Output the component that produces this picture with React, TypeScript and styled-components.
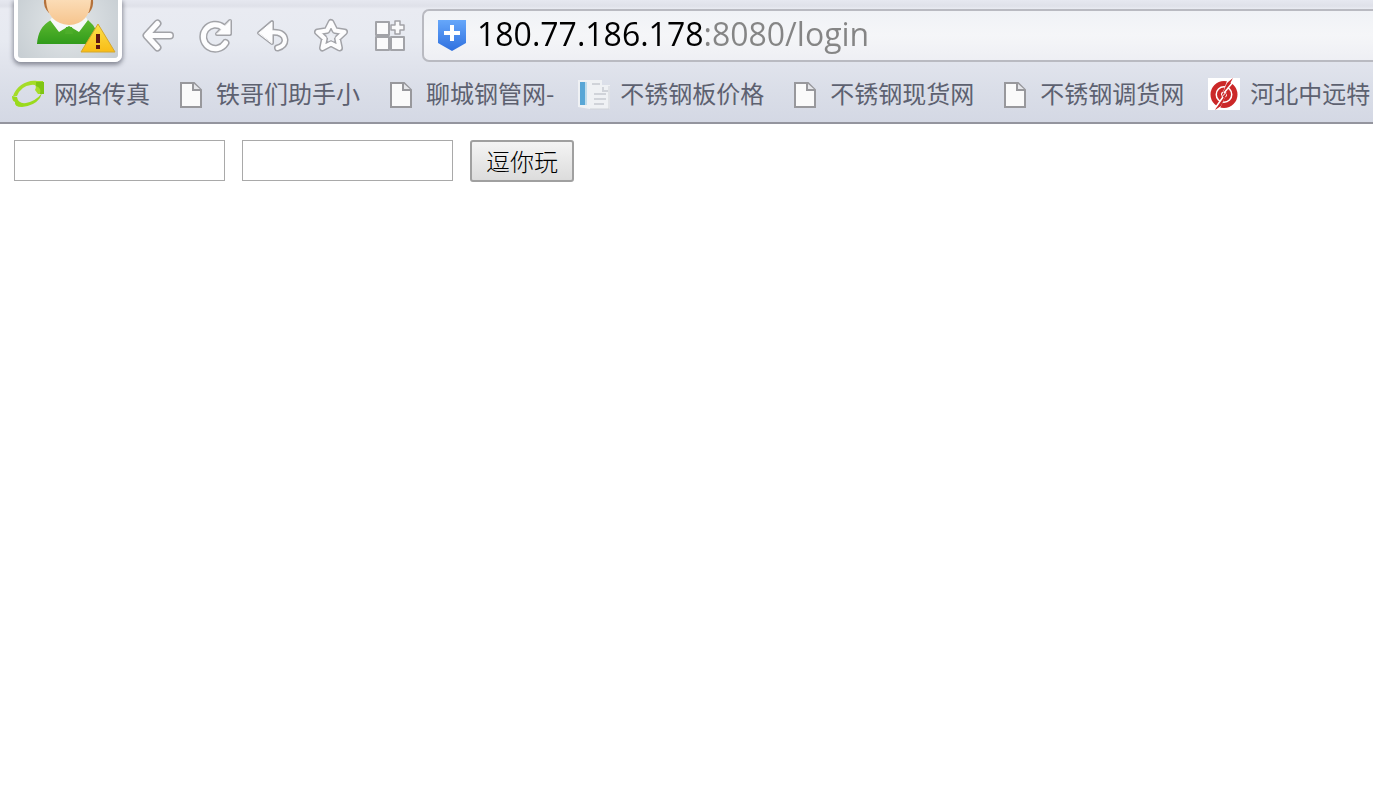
import React from "react";
import styled, { createGlobalStyle } from "styled-components";

const GlobalStyle = createGlobalStyle`
  body {
    margin: 0;
    background: #fff;
    font-family: "Noto Sans CJK SC", sans-serif;
  }
  * { box-sizing: border-box; }
`;

const Chrome = styled.header`
  overflow: hidden;
  border-bottom: 2px solid #94959e;
  background: linear-gradient(#e6e8f0 0, #dfe1e9 6px, #e9ebf2 9px, #e7eaf1 40px, #e0e3ec 66px, #dadee8 90px, #d4d8e4 100%);
`;

const Toolbar = styled.div`
  display: flex;
  align-items: flex-start;
  height: 70px;
  padding-left: 14px;
`;

const Avatar = styled.button`
  flex: none;
  width: 108px;
  height: 62px;
  margin-right: 7px;
  padding: 0;
  border: 4px solid #fff;
  border-top: 0;
  border-radius: 0 0 7px 7px;
  background: radial-gradient(circle at 50% 40%, #e4e8ea, #c6cdd2);
  box-shadow: 0 2px 4px 1px rgba(90, 94, 108, 0.65);
  overflow: hidden;
  svg { display: block; }
`;

const ToolButton = styled.button`
  flex: none;
  display: flex;
  align-items: center;
  justify-content: center;
  width: 58px;
  height: 70px;
  padding: 0;
  border: 0;
  background: none;
`;

const AddressBar = styled.label`
  flex: 1;
  display: flex;
  align-items: center;
  gap: 11px;
  min-width: 0;
  height: 53px;
  margin: 9px 0 0 3px;
  padding-left: 14px;
  border: 2px solid #b9bac1;
  border-right: 0;
  border-radius: 7px 0 0 7px;
  background: linear-gradient(#f0f2f6, #f5f6f8 50%, #eeeff4);
  svg { flex: none; }
`;

/* The host is shown in black and the rest of the URL in grey. */
const AddressInput = styled.input`
  flex: 1;
  min-width: 0;
  height: 48px;
  padding: 0 0 4px;
  border: 0;
  outline: 0;
  font: 32px/44px "Open Sans", sans-serif;
  color: #000;
  background: linear-gradient(90deg, #000 227px, #858585 227px);
  -webkit-background-clip: text;
  background-clip: text;
  -webkit-text-fill-color: transparent;
`;

const Bookmarks = styled.nav`
  display: flex;
  gap: 24px;
  height: 52px;
  padding: 0 0 4px 12px;
`;

const Bookmark = styled.a`
  flex: none;
  display: flex;
  align-items: center;
  gap: 10px;
  color: #5d6170;
  text-decoration: none;
`;

const BookmarkTitle = styled.span`
  padding-bottom: 2px;
  font-size: 24px;
  line-height: 46px;
  white-space: nowrap;
`;

const LoginForm = styled.form`
  display: flex;
  gap: 17px;
  padding: 16px 14px;
`;

const Field = styled.input`
  width: 211px;
  height: 41px;
  padding: 4px;
  border: 1px solid #a9a9a9;
  background: #fff;
  font: 24px "Noto Sans CJK SC", sans-serif;
`;

const Submit = styled.button`
  width: 104px;
  height: 42px;
  padding: 0;
  border: 2px solid #a0a0a0;
  border-radius: 3px;
  background: linear-gradient(#f4f4f4, #dcdcdc);
  color: #000;
  font: 300 24px/36px "Noto Sans CJK SC", sans-serif;
`;

const Portrait = () => (
  <svg width="100" height="58" viewBox="0 0 100 58" aria-hidden="true">
    <defs>
      <linearGradient id="shirt" x2="0" y2="1">
        <stop stopColor="#62bd32" />
        <stop offset="1" stopColor="#319b1b" />
      </linearGradient>
      <linearGradient id="skin" x2="0" y2="1">
        <stop stopColor="#fbdcb6" />
        <stop offset="1" stopColor="#f6c48d" />
      </linearGradient>
      <linearGradient id="warn" x2="0" y2="1">
        <stop stopColor="#fbe14b" />
        <stop offset="1" stopColor="#f9bc16" />
      </linearGradient>
    </defs>
    <path d="M26 0H75Q76 7 71 13L31 13Q25 7 26 0Z" fill="#b4713a" />
    <path d="M19 44Q20 27 33 20L37 17H65L70 20Q80 28 82 44Z" fill="url(#shirt)" />
    <path d="M32 20L36 15Q50 30 66 15L70 20L61 32L51 26L41 32Z" fill="#f5f8f7" />
    <path d="M48 27H54L55 34H47Z" fill="#4dae2a" />
    <path d="M28 0H73Q72 24 51 25Q29 23 28 0Z" fill="url(#skin)" />
    <path d="M80 24L97 52H63Z" fill="url(#warn)" stroke="#d4a72c" strokeWidth="1" strokeLinejoin="round" />
    <path d="M78 34H82V43H78ZM78 45H82V49H78Z" fill="#5d1613" />
  </svg>
);

const Tool = ({ children }: { children: React.ReactNode }) => (
  <svg width="36" height="36" viewBox="0 0 36 36" strokeLinejoin="round" strokeLinecap="round" aria-hidden="true">
    {children}
  </svg>
);

/* A white line with a grey rim, optionally joined to a solid shape. */
const Rimmed = ({ line, shape = "", width = 5 }: { line: string; shape?: string; width?: number }) => (
  <>
    <path d={line} fill="none" stroke="#a2a3a8" strokeWidth={width + 3} />
    <path d={shape} fill="#a2a3a8" stroke="#a2a3a8" strokeWidth="4" />
    <path d={line} fill="none" stroke="#fdfdfe" strokeWidth={width} />
    <path d={shape} fill="#fdfdfe" stroke="#fdfdfe" strokeWidth="1" />
  </>
);

const BackIcon = () => (
  <Tool>
    <Rimmed line="M17.500 6.500L6.500 18.500L17.500 30.500M8 18.500H30" />
  </Tool>
);
const ReloadIcon = () => (
  <Tool>
    <Rimmed line="M25 10.500A12 12 0 1 0 27.500 26" shape="M32 4V17H19Z" />
  </Tool>
);
const UndoIcon = () => (
  <Tool>
    <Rimmed line="M14 15.500Q28 14 29 23Q29 29 21.500 31" width={4} shape="M3 16L16 5V26Z" />
  </Tool>
);
const StarIcon = () => (
  <Tool>
    <Rimmed width={4} line="M17 5.500L21 13.500L30.500 15L23.500 21.500L25.500 31L17 26.500L8.500 31L10.500 21.500L3.500 15L13 13.500Z" />
    <path d="M17 16L18.500 19L21.500 19.500L19.500 21.500L20 24.500L17 23L14 24.500L14.500 21.500L12.500 19.500L15.500 19Z" fill="#eceef3" />
  </Tool>
);
const AppsIcon = () => (
  <Tool>
    <path d="M4 5H17V18H4ZM4 20H17V33H4ZM19 20H32V33H19Z" fill="#fafafb" stroke="#a2a3a8" strokeWidth="2" />
    <path d="M23 4H28V8H32V13H28V17H23V13H19V8H23Z" fill="#fafafb" stroke="#a2a3a8" strokeWidth="1.5" />
  </Tool>
);

const ShieldIcon = () => (
  <svg width="28" height="31" viewBox="0 0 28 31" aria-hidden="true">
    <defs>
      <linearGradient id="shield" x2="0" y2="1">
        <stop stopColor="#66a7fa" />
        <stop offset="1" stopColor="#2f70df" />
      </linearGradient>
    </defs>
    <path d="M0 0H28V23L14 31L0 23Z" fill="url(#shield)" />
    <path d="M14 5V21M6 13H22" stroke="#fff" strokeWidth="4" />
  </svg>
);

const Favicon = ({ children }: { children: React.ReactNode }) => (
  <svg width="32" height="32" viewBox="0 0 32 32" aria-hidden="true">
    {children}
  </svg>
);

const FaxIcon = () => (
  <Favicon>
    <path d="M1 18C4 8 16 1 25 3L31 3Q32 10 31 16H26L23 12Q26 6 19 7Q9 8 5 18Z" fill="#a5dc28" />
    <path d="M0 18Q0 23 3 24Q2 29 10 29Q22 28 28 20L30 15Q24 23 14 25Q6 26 5 19Z" fill="#9ada1c" />
    <path d="M24 4H32V16H28Q30 10 24 8Z" fill="#7fc514" />
  </Favicon>
);
const PageIcon = () => (
  <Favicon>
    <path d="M7 5H20L27 12V29H7Z" fill="#fafafa" stroke="#98989c" strokeWidth="2" />
    <path d="M19 5V12H27" fill="#e5e6ea" stroke="#98989c" strokeWidth="2" />
  </Favicon>
);
const SheetIcon = () => (
  <Favicon>
    <path d="M0 2H24V7H32V31H12L0 29Z" fill="#eff1f4" />
    <path d="M2 4H7V27H2Z" fill="#58a6d6" />
    <path d="M7 4H9V27H7Z" fill="#bfdcec" />
    <path d="M14 6H22M16 16H28M16 21H28M16 26H26M25 9V13H30" fill="none" stroke="#d0d3d9" strokeWidth="2" />
    <path d="M31 8V31H12" fill="none" stroke="#cfd2d8" />
  </Favicon>
);
const SteelIcon = () => (
  <Favicon>
    <rect width="32" height="32" fill="#fff" />
    <circle cx="16" cy="16.500" r="11" fill="none" stroke="#cb2828" strokeWidth="5" />
    <circle cx="16" cy="16.500" r="5" fill="none" stroke="#cb2828" strokeWidth="4" />
    <path d="M20 3L16 14M16 19L11 30" stroke="#fff" strokeWidth="2" />
    <path d="M25 0L19 5L13 19L17 15ZM7 32L13 28L20 13L15 18Z" fill="#cb2828" />
    <path d="M25 4L16 15M15 19L8 29" stroke="#fff" strokeWidth="1.5" />
  </Favicon>
);

const tools = [
  { label: "后退", Icon: BackIcon },
  { label: "刷新", Icon: ReloadIcon },
  { label: "撤销", Icon: UndoIcon },
  { label: "收藏", Icon: StarIcon },
  { label: "应用", Icon: AppsIcon },
];

const bookmarks = [
  { title: "网络传真", Icon: FaxIcon },
  { title: "铁哥们助手小", Icon: PageIcon },
  { title: "聊城钢管网-", Icon: PageIcon },
  { title: "不锈钢板价格", Icon: SheetIcon },
  { title: "不锈钢现货网", Icon: PageIcon },
  { title: "不锈钢调货网", Icon: PageIcon },
  { title: "河北中远特", Icon: SteelIcon },
];

export default function App() {
  return (
    <>
      <GlobalStyle />
      <Chrome>
        <Toolbar>
          <Avatar type="button" aria-label="账户">
            <Portrait />
          </Avatar>
          {tools.map(({ label, Icon }) => (
            <ToolButton key={label} type="button" aria-label={label}>
              <Icon />
            </ToolButton>
          ))}
          <AddressBar>
            <ShieldIcon />
            <AddressInput aria-label="地址" spellCheck={false} defaultValue="180.77.186.178:8080/login" />
          </AddressBar>
        </Toolbar>
        <Bookmarks>
          {bookmarks.map(({ title, Icon }) => (
            <Bookmark key={title} href="#">
              <Icon />
              <BookmarkTitle>{title}</BookmarkTitle>
            </Bookmark>
          ))}
        </Bookmarks>
      </Chrome>
      <main>
        <LoginForm onSubmit={(event) => event.preventDefault()}>
          <Field type="text" aria-label="用户名" />
          <Field type="password" aria-label="密码" />
          <Submit type="submit">逗你玩</Submit>
        </LoginForm>
      </main>
    </>
  );
}
